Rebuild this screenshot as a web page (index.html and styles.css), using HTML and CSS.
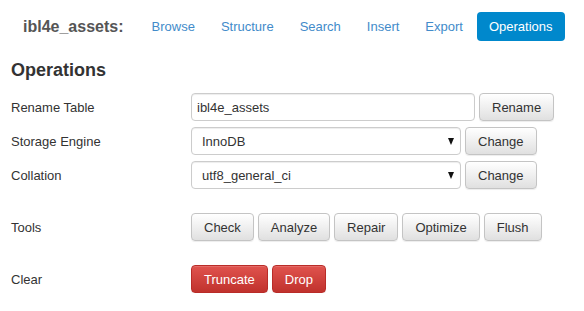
FILE: index.html
```html
<!DOCTYPE html>
<html>
<head>
<meta charset="utf-8">
<link rel="stylesheet" href="styles.css">
</head>
<body>
<header class="topbar">
  <div class="table-name">ibl4e_assets:</div>
  <nav class="pills">
    <a class="pill" href="#">Browse</a>
    <a class="pill" href="#">Structure</a>
    <a class="pill" href="#">Search</a>
    <a class="pill" href="#">Insert</a>
    <a class="pill" href="#">Export</a>
    <a class="pill active" href="#">Operations</a>
  </nav>
</header>
<main class="content">
  <h2 class="title">Operations</h2>
  <div class="group">
    <div class="row">
      <label class="label">Rename Table</label>
      <div class="controls">
        <input class="input" type="text" value="ibl4e_assets">
        <button class="btn">Rename</button>
      </div>
    </div>
    <div class="row">
      <label class="label">Storage Engine</label>
      <div class="controls">
        <div class="select-wrap"><select class="select"><option>InnoDB</option></select></div>
        <button class="btn">Change</button>
      </div>
    </div>
    <div class="row">
      <label class="label">Collation</label>
      <div class="controls">
        <div class="select-wrap"><select class="select"><option>utf8_general_ci</option></select></div>
        <button class="btn">Change</button>
      </div>
    </div>
  </div>
  <div class="group spaced">
    <div class="row">
      <label class="label">Tools</label>
      <div class="controls">
        <button class="btn">Check</button>
        <button class="btn">Analyze</button>
        <button class="btn">Repair</button>
        <button class="btn">Optimize</button>
        <button class="btn">Flush</button>
      </div>
    </div>
  </div>
  <div class="group spaced">
    <div class="row">
      <label class="label">Clear</label>
      <div class="controls">
        <button class="btn btn-danger">Truncate</button>
        <button class="btn btn-danger">Drop</button>
      </div>
    </div>
  </div>
</main>
</body>
</html>
```
FILE: styles.css
```css
* { box-sizing: border-box; }
html, body {
  margin: 0;
  padding: 0;
  background: #fff;
  font-family: "Liberation Sans", Arial, sans-serif;
  font-size: 13px;
  color: #333;
}
.topbar {
  display: flex;
  align-items: center;
  padding: 12px 0 0 23px;
}
.table-name {
  font-size: 16px;
  font-weight: bold;
  color: #555;
  margin-right: 16px;
}
.pills {
  display: flex;
  gap: 2px;
}
.pill {
  display: block;
  padding: 6px 12px;
  line-height: 17px;
  color: #428bca;
  text-decoration: none;
  border-radius: 4px;
}
.pill.active {
  background: #0088cc;
  color: #fff;
}
.content {
  padding: 0 11px;
}
.title {
  margin: 19px 0 13px;
  font-size: 18px;
  line-height: 20px;
  font-weight: bold;
  color: #333;
}
.group {
  display: flex;
  flex-direction: column;
  gap: 6px;
}
.group.spaced {
  margin-top: 24px;
}
.row {
  display: flex;
  align-items: center;
}
.label {
  width: 180px;
  flex: none;
}
.controls {
  display: flex;
  align-items: center;
  gap: 4px;
}
.input {
  width: 284px;
  height: 28px;
  padding: 0 5px;
  border: 1px solid #ccc;
  border-radius: 4px;
  box-shadow: inset 0 1px 1px rgba(0,0,0,0.075);
  font-family: inherit;
  font-size: 13px;
  color: #333;
}
.select-wrap {
  position: relative;
  width: 270px;
  height: 28px;
}
.select-wrap::after {
  content: "";
  position: absolute;
  right: 7px;
  top: 11px;
  width: 0;
  height: 0;
  border-left: 3.5px solid transparent;
  border-right: 3.5px solid transparent;
  border-top: 7px solid #111;
  pointer-events: none;
}
.select {
  -webkit-appearance: none;
  appearance: none;
  width: 100%;
  height: 28px;
  padding: 0 10px;
  border: 1px solid #ccc;
  border-radius: 4px;
  background: #fff;
  box-shadow: inset 0 1px 1px rgba(0,0,0,0.075);
  font-family: inherit;
  font-size: 13px;
  color: #333;
}
.btn {
  height: 28px;
  padding: 0 12px;
  border: 1px solid #c4c4c4;
  border-radius: 4px;
  background: linear-gradient(#ffffff, #e0e0e0);
  box-shadow: inset 0 1px 0 rgba(255,255,255,0.15), 0 1px 1px rgba(0,0,0,0.075);
  font-family: inherit;
  font-size: 13px;
  color: #333;
  cursor: pointer;
}
.btn-danger {
  border-color: #b92c28;
  background: linear-gradient(#e0534e, #c0322d);
  color: #fff;
}
```
